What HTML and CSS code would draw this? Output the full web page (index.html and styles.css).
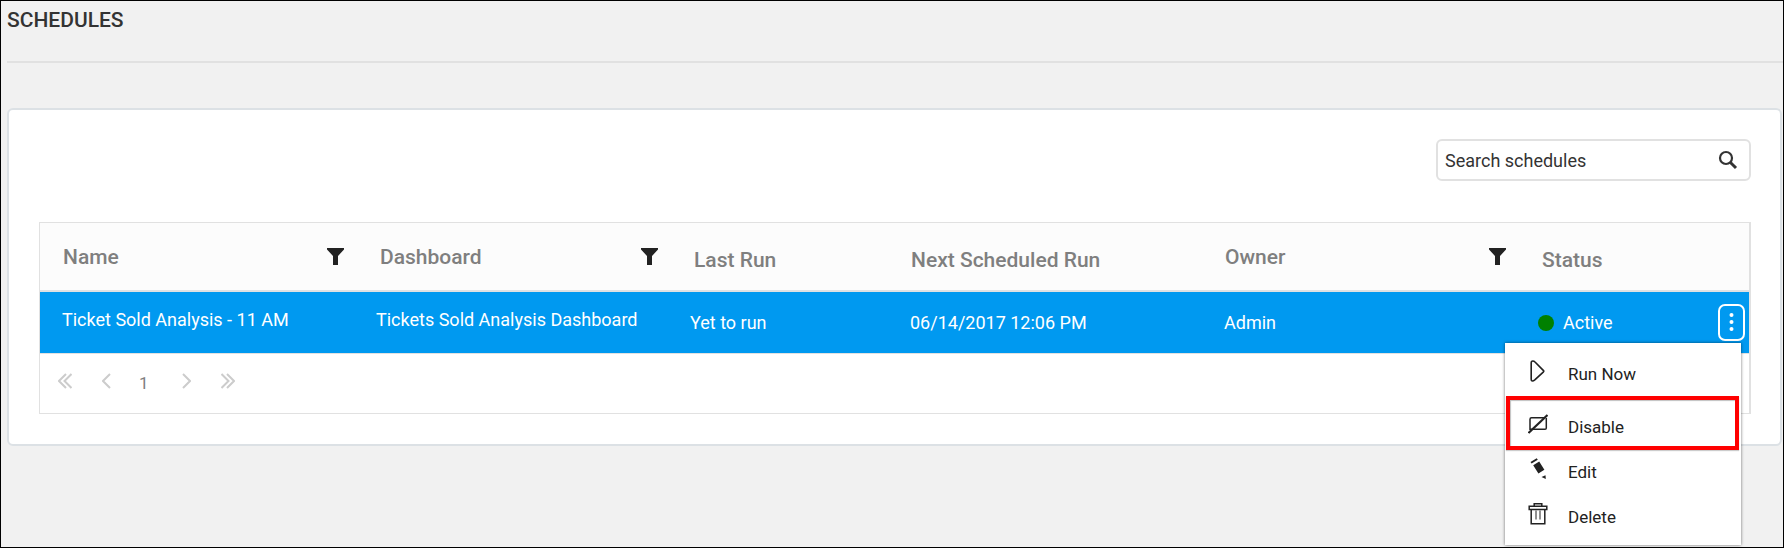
FILE: index.html
```html
<!DOCTYPE html>
<html lang="en">
<head>
<meta charset="utf-8">
<title>Schedules</title>
<meta name="viewport" content="width=device-width, initial-scale=1">
<link rel="stylesheet" href="styles.css">
</head>
<body>
<svg class="sprite" aria-hidden="true">
  <symbol id="funnel" viewBox="0 0 17 17"><path d="M0 0h17v1.500l-6 6.500v9H6V8L0 1.500z" fill="currentColor"/></symbol>
</svg>
<header class="page-head">
  <h1 class="page-title">SCHEDULES</h1>
</header>
<main class="card">
  <form class="search" role="search">
    <input class="search-input" type="text" placeholder="Search schedules" aria-label="Search schedules">
    <button class="search-button" type="button" aria-label="Search">
      <svg width="20" height="20" viewBox="0 0 20 20" fill="none" stroke="currentColor"><circle cx="8" cy="8" r="6" stroke-width="2.200"/><path d="M12.200 12.200L18 18" stroke-width="3"/></svg>
    </button>
  </form>
  <section class="grid">
    <table class="table">
      <colgroup>
        <col class="col-wide"><col class="col-wide"><col class="col-run"><col class="col-wide"><col class="col-wide"><col class="col-status">
      </colgroup>
      <thead>
        <tr>
          <th scope="col"><div class="head"><span>Name</span><button class="filter" type="button" aria-label="Filter by name"><svg><use href="#funnel"/></svg></button></div></th>
          <th scope="col" class="inset"><div class="head"><span>Dashboard</span><button class="filter" type="button" aria-label="Filter by dashboard"><svg><use href="#funnel"/></svg></button></div></th>
          <th scope="col" class="inset"><div class="head head-plain"><span>Last Run</span></div></th>
          <th scope="col"><div class="head head-plain"><span>Next Scheduled Run</span></div></th>
          <th scope="col"><div class="head"><span>Owner</span><button class="filter" type="button" aria-label="Filter by owner"><svg><use href="#funnel"/></svg></button></div></th>
          <th scope="col" class="inset"><div class="head head-plain"><span>Status</span></div></th>
        </tr>
      </thead>
      <tbody>
        <tr>
          <td class="cell-link"><a href="#">Ticket Sold Analysis - 11 AM</a></td>
          <td class="cell-link"><a href="#">Tickets Sold Analysis Dashboard</a></td>
          <td>Yet to run</td>
          <td>06/14/2017 12:06 PM</td>
          <td>Admin</td>
          <td>
            <div class="status">
              <span class="dot"></span><span>Active</span>
              <div class="actions">
                <button class="more" type="button" aria-label="Actions" aria-expanded="true">
                  <svg width="5" height="20" viewBox="0 0 5 20" fill="currentColor"><circle cx="2.500" cy="2" r="2"/><circle cx="2.500" cy="9" r="2"/><circle cx="2.500" cy="16" r="2"/></svg>
                </button>
                <ul class="menu">
                  <li><button class="item" type="button">
                    <svg class="icon" viewBox="0 0 20 24" fill="none" stroke="currentColor" stroke-width="1.600" stroke-linejoin="round"><path d="M3.200 4q0-2 1.600-2 1.300 0 2.200 1l8.500 8.600q.6.600 0 1.200l-8.700 8.100q-1.300 1.100-2.400 1.100-1.200 0-1.200-2z"/></svg>
                    Run Now</button></li>
                  <li class="marked"><button class="item" type="button">
                    <svg class="icon" viewBox="0 0 20 24" fill="none" stroke="currentColor"><path d="M16 5.800H3.500q-1.500 0-1.500 1.500V17.200H17q1.300 0 1.300-1.300V6" stroke-width="1.500"/><path d="M.500 21L19.500 3" stroke-width="2.200"/></svg>
                    Disable</button></li>
                  <li><button class="item" type="button">
                    <svg class="icon" viewBox="0 0 20 24" fill="currentColor"><path d="M2.500 5L8.700 1.300l1.100 1.500-6.200 3.800zM5.200 8.200l6-3.700 5.200 8.300-6 3.800zM13.500 20l4-1.800.3 3.800z"/></svg>
                    Edit</button></li>
                  <li><button class="item" type="button">
                    <svg class="icon" viewBox="0 0 20 24" fill="none" stroke="currentColor" stroke-width="1.500"><path d="M6.200 4V1.800h7.600V4M1.200 4.200h17.600V7.500H1.200zM3.200 8v13.800h13.600V8"/><path d="M8 8.500v9M12 8.500v9" stroke-width="1"/></svg>
                    Delete</button></li>
                </ul>
              </div>
            </div>
          </td>
        </tr>
      </tbody>
    </table>
    <nav class="pager" aria-label="Pages">
      <button type="button" aria-label="First page"><svg width="14" height="16" viewBox="0 0 14 16"><path d="M8 1L1 8l7 7M13.500 1l-7 7 7 7"/></svg></button>
      <button type="button" aria-label="Previous page"><svg width="9" height="16" viewBox="0 0 9 16"><path d="M8 1L1 8l7 7"/></svg></button>
      <span class="page-number">1</span>
      <button type="button" aria-label="Next page"><svg width="9" height="16" viewBox="0 0 9 16"><path d="M1 1l7 7-7 7"/></svg></button>
      <button type="button" aria-label="Last page"><svg width="14" height="16" viewBox="0 0 14 16"><path d="M.500 1l7 7-7 7M6 1l7 7-7 7"/></svg></button>
    </nav>
  </section>
</main>
</body>
</html>
```

FILE: styles.css
```css
* {
  box-sizing: border-box;
}

body {
  margin: 0;
  min-height: 100vh;
  padding: 0 0 0 6px;
  border: 1px solid #000;
  background: #f1f1f1;
  color: #333;
  font-family: Roboto, "Liberation Sans", sans-serif;
  font-size: 18px;
}

button {
  padding: 0;
  border: 0;
  background: none;
  color: inherit;
  font: inherit;
}

svg {
  display: block;
}

.sprite {
  position: absolute;
  width: 0;
  height: 0;
}

.page-head {
  height: 62px;
  padding-top: 6px;
  border-bottom: 2px solid #e1e1e1;
}

.page-title {
  margin: 0;
  font-size: 21px;
  line-height: 26px;
  font-weight: 500;
}

.card {
  margin: 45px 1px 0 0;
  padding: 29px 29px 30px 30px;
  border: 2px solid #dce1e5;
  border-radius: 6px;
  background: #fff;
}

.search {
  display: flex;
  align-items: center;
  width: 315px;
  height: 42px;
  margin: 0 0 41px auto;
  padding: 0 11px 0 7px;
  border: 2px solid #e1e1e1;
  border-radius: 6px;
}

.search-input {
  flex: 1;
  min-width: 0;
  padding: 0;
  border: 0;
  outline: 0;
  background: none;
  color: #333;
  font: inherit;
}

.search-input::placeholder {
  color: #333;
  opacity: 1;
}

.grid {
  border: 1px solid #e1e1e1;
  border-right-width: 2px;
}

.table {
  width: 100%;
  table-layout: fixed;
  border-collapse: separate;
  border-spacing: 0;
}

.col-wide {
  width: 314px;
}

.col-run {
  width: 220px;
}

th {
  height: 69px;
  padding: 0 10px 0 23px;
  border-bottom: 2px solid #dfe1e3;
  background: #fcfcfc;
  color: #7f7f7f;
  font-size: 21px;
  line-height: 24px;
  font-weight: 500;
  text-align: left;
}

.inset {
  padding-left: 26px;
}

.head {
  display: flex;
  align-items: center;
  justify-content: space-between;
  height: 24px;
}

.head-plain {
  padding-top: 6px;
}

.filter {
  color: #222;
}

.filter svg {
  width: 17px;
  height: 17px;
}

td {
  height: 61px;
  padding: 0 4px 0 22px;
  background: #0099f0;
  color: #fff;
  line-height: 24px;
}

.cell-link {
  padding-bottom: 6px;
}

.cell-link a {
  color: inherit;
  text-decoration: none;
}

.status {
  display: flex;
  align-items: center;
}

.dot {
  width: 16px;
  height: 16px;
  margin-right: 9px;
  border-radius: 50%;
  background: #008000;
}

.actions {
  position: relative;
  margin-left: auto;
}

.more {
  display: grid;
  place-items: center;
  width: 27px;
  height: 37px;
  border: 2px solid #fff;
  border-radius: 7px;
}

.menu {
  position: absolute;
  top: 39px;
  right: 4px;
  width: 236px;
  margin: 0;
  padding: 8px 0 6px;
  list-style: none;
  background: #fff;
  color: #222;
  font-size: 17px;
  box-shadow: 0 0 3px rgba(0, 0, 0, 0.55);
}

.item {
  display: flex;
  align-items: center;
  gap: 20px;
  width: 100%;
  height: 45px;
  padding-left: 23px;
  text-align: left;
}

.icon {
  width: 20px;
  height: 24px;
  margin-bottom: 6px;
}

.marked {
  position: relative;
  margin-top: 8px;
}

.marked::after {
  content: "";
  position: absolute;
  inset: -8px 2px -1px 1px;
  border: 4px solid #f00;
  box-shadow: 0 1px 1px rgba(0, 0, 0, 0.2), inset 1px 1px 1px rgba(0, 0, 0, 0.25);
}

.pager {
  display: flex;
  align-items: center;
  height: 60px;
  padding: 0 0 6px 18px;
  border-top: 1px solid #e1e1e1;
  color: #ccc;
}

.pager svg {
  fill: none;
  stroke: currentColor;
  stroke-width: 2;
}

.pager button:nth-of-type(2) {
  margin-left: 30px;
}

.pager button:nth-of-type(4) {
  margin-left: 30px;
}

.page-number {
  width: 71px;
  padding: 4px 0 0 28px;
  color: #7f7f7f;
  font-size: 17px;
}
```
